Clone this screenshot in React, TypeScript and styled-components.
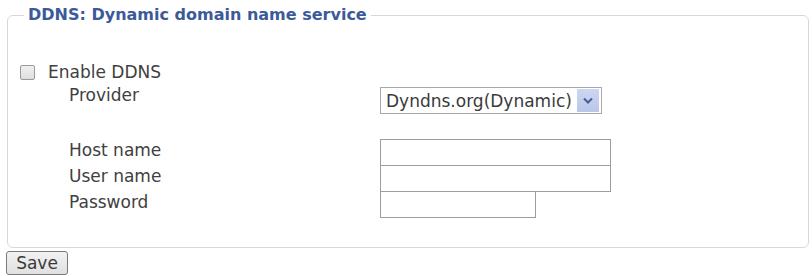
import React from "react";
import styled, { createGlobalStyle } from "styled-components";

const Global = createGlobalStyle`
  html, body { margin: 0; padding: 0; background: #ffffff; }
  body { font-family: "DejaVu Sans", Verdana, sans-serif; color: #404040; }
`;

const Page = styled.div`
  padding: 5px 0 0 7px;
  width: 802px;
`;

const Fieldset = styled.fieldset`
  margin: 0;
  padding: 0;
  border: 1px solid #d8d8d8;
  border-radius: 6px;
  min-width: 0;
`;

const Legend = styled.legend`
  margin-left: 16px;
  padding: 0 4px;
  font-size: 16px;
  line-height: 20px;
  font-weight: bold;
  color: #3d5a98;
`;

const Body = styled.div`
  padding: 36px 0 30px 12px;
`;

const CheckRow = styled.label`
  display: flex;
  align-items: center;
  gap: 13px;
  height: 22px;
  font-size: 17px;
  line-height: 20px;
`;

const Check = styled.input.attrs({ type: "checkbox" })`
  appearance: none;
  margin: 0;
  width: 15px;
  height: 15px;
  border: 1px solid #9a9a9a;
  border-radius: 2px;
  background: linear-gradient(#f0f0f0, #dedede);
  box-sizing: border-box;
`;

const Row = styled.div<{ $h: number; $top?: number }>`
  display: grid;
  grid-template-columns: 311px auto;
  align-items: start;
  height: ${(p) => p.$h}px;
  margin-top: ${(p) => p.$top ?? 0}px;
  padding-left: 49px;
`;

const Label = styled.span<{ $pt?: number }>`
  font-size: 17px;
  line-height: 20px;
  padding-top: ${(p) => p.$pt ?? 0}px;
`;

const SelectBox = styled.div`
  margin-top: 4px;
  width: 222px;
  height: 27px;
  box-sizing: border-box;
  border: 1px solid #a8a8a8;
  display: flex;
  align-items: center;
  justify-content: space-between;
  padding: 0 2px 0 5px;
  font-size: 17px;
  color: #3a3a3a;
  background: #fff;
`;

const ArrowBtn = styled.span`
  width: 22px;
  height: 23px;
  background: linear-gradient(#ccd7f0, #b9c7e8);
  display: flex;
  align-items: center;
  justify-content: center;
`;

const TextInput = styled.input<{ $w: number }>`
  margin: 0;
  width: ${(p) => p.$w}px;
  height: 27px;
  box-sizing: border-box;
  border: 1px solid #9d9d9d;
  background: #fff;
  padding: 0 3px;
  font: inherit;
`;

const SaveButton = styled.button`
  margin: 3px 0 0 -1px;
  width: 62px;
  height: 24px;
  padding: 0;
  box-sizing: border-box;
  border: 1px solid #7a7a7a;
  border-radius: 3px;
  background: linear-gradient(#f2f2f2, #e0e0e0);
  font-family: "DejaVu Sans", Verdana, sans-serif;
  font-size: 17px;
  line-height: 20px;
  color: #3a3a3a;
`;

const fields = [
  { label: "Host name", w: 231, type: "text" },
  { label: "User name", w: 231, type: "text" },
  { label: "Password", w: 156, type: "password" },
];

export default function App() {
  return (
    <>
      <Global />
      <Page>
        <Fieldset>
          <Legend>DDNS: Dynamic domain name service</Legend>
          <Body>
            <CheckRow>
              <Check />
              Enable DDNS
            </CheckRow>
            <Row $h={31}>
              <Label $pt={2}>Provider</Label>
              <SelectBox>
                <span>Dyndns.org(Dynamic)</span>
                <ArrowBtn>
                  <svg width="10" height="7" viewBox="0 0 10 7">
                    <path d="M1 1.5 L5 5.5 L9 1.5" fill="none" stroke="#4a5c9a" strokeWidth="2" />
                  </svg>
                </ArrowBtn>
              </SelectBox>
            </Row>
            {fields.map((f, i) => (
              <Row key={f.label} $h={26} $top={i === 0 ? 25 : 0}>
                <Label $pt={1}>{f.label}</Label>
                <TextInput $w={f.w} type={f.type} />
              </Row>
            ))}
          </Body>
        </Fieldset>
        <SaveButton>Save</SaveButton>
      </Page>
    </>
  );
}
